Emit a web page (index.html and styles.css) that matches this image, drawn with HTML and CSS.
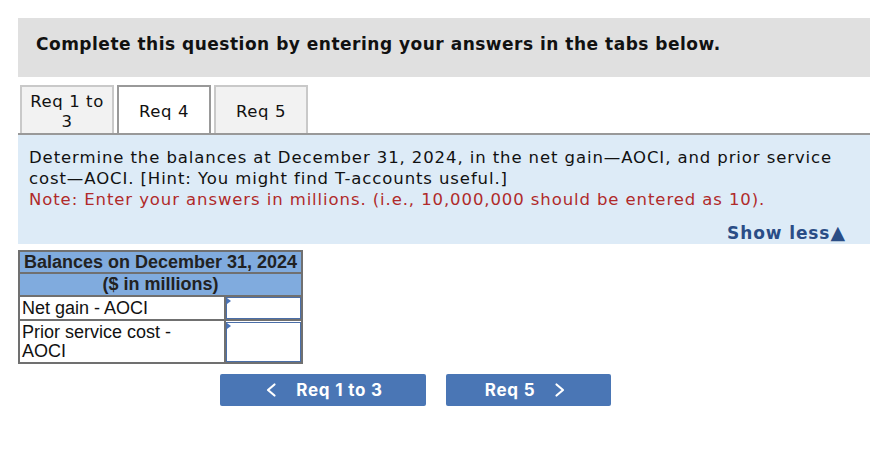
FILE: index.html
```html
<!DOCTYPE html>
<html lang="en">
<head>
  <meta charset="UTF-8" />
  <title>Req 4</title>
  <link rel="stylesheet" href="styles.css">
</head>
<body>

<div class="page">
  <div class="instructions">Complete this question by entering your answers in the tabs below.</div>

  <div class="tabs">
    <div class="tab">Req 1 to 3</div>
    <div class="tab active">Req 4</div>
    <div class="tab">Req 5</div>
  </div>

  <div class="question">
    <p>Determine the balances at December 31, 2024, in the net gain&mdash;AOCI, and prior service cost&mdash;AOCI. [Hint: You might find T-accounts useful.]</p>
    <p class="note">Note: Enter your answers in millions. (i.e., 10,000,000 should be entered as 10).</p>
    <div class="show-less">Show less<span class="tri">&#9650;</span></div>
  </div>

  <table class="balances">
    <tr class="head1"><th colspan="2">Balances on December 31, 2024</th></tr>
    <tr class="head2"><th colspan="2">($ in millions)</th></tr>
    <tr class="row1">
      <td class="label">Net gain - AOCI</td>
      <td class="entry"><div class="box"></div></td>
    </tr>
    <tr class="row2">
      <td class="label">Prior service cost -<br>AOCI</td>
      <td class="entry"><div class="box"></div></td>
    </tr>
  </table>

  <div class="nav">
    <button class="nav-btn prev">
      <svg class="chev" width="12" height="16" viewBox="0 0 12 16"><polyline points="9.5,2.5 3,8 9.5,13.5" fill="none" stroke="#fff" stroke-width="2.2" stroke-linecap="round" stroke-linejoin="round"/></svg>
      Req 1 to 3
    </button>
    <button class="nav-btn next">
      Req 5
      <svg class="chev" width="12" height="16" viewBox="0 0 12 16"><polyline points="2.5,2.5 9,8 2.5,13.5" fill="none" stroke="#fff" stroke-width="2.2" stroke-linecap="round" stroke-linejoin="round"/></svg>
    </button>
  </div>
</div>

</body>
</html>
```

FILE: styles.css
```css
body {
  margin: 0;
  font-family: "DejaVu Sans", Verdana, sans-serif;
  color: #111;
}
.page {
  padding: 18px 0 0 18px;
  width: 852px;
}
.instructions {
  background: #e0e0e0;
  height: 59px;
  box-sizing: border-box;
  padding: 16px 0 0 18px;
  font-weight: bold;
  font-size: 17px;
  letter-spacing: 0.5px;
}
.tabs {
  display: flex;
  gap: 3px;
  margin-top: 8px;
  padding-left: 2px;
  border-bottom: 2px solid #999;
}
.tab {
  width: 94px;
  height: 48px;
  box-sizing: border-box;
  border: 2px solid #c9c9c9;
  border-bottom: none;
  background: #f2f2f2;
  font-size: 16.5px;
  letter-spacing: 0.6px;
  line-height: 20px;
  text-align: center;
  display: flex;
  align-items: center;
  justify-content: center;
  padding: 4px 4px 0;
}
.tab.active {
  background: #fff;
  border-color: #999;
}
.question {
  background: #ddebf7;
  height: 109px;
  box-sizing: border-box;
  padding: 12px 20px 0 11px;
  font-size: 16.5px;
  letter-spacing: 0.9px;
  line-height: 21px;
}
.question p {
  margin: 0;
}
.note {
  color: #b02a2a;
}
.show-less {
  text-align: right;
  font-weight: bold;
  font-size: 17px;
  letter-spacing: 0.9px;
  color: #2a4d86;
  margin: 13px 5px 0 0;
}
.tri {
  font-size: 19px;
  line-height: 17px;
  letter-spacing: 0;
}
.balances {
  margin-top: 6px;
  border-collapse: collapse;
  border: 2px solid #707070;
  width: 285px;
  font-family: "Liberation Sans", Arial, sans-serif;
  font-size: 18px;
}
.balances th {
  background: #80abde;
  color: #222;
  border: 2px solid #707070;
  padding: 0;
  line-height: 19px;
}
.balances td {
  border: 2px solid #707070;
  padding: 0;
  line-height: 19px;
}
.head1 th {
  height: 20px;
}
.head2 th {
  height: 21px;
}
.row1 td {
  height: 22px;
}
.row2 td {
  height: 41px;
}
.balances .label {
  padding-left: 2px;
  width: 202px;
}
.box {
  border: 1px solid #4a6ea8;
  height: 20px;
  position: relative;
}
.row2 .box {
  height: 38px;
}
.box::before {
  content: "";
  position: absolute;
  left: 0;
  top: 0;
  border-left: 4px solid #4a74b8;
  border-top: 3px solid transparent;
  border-bottom: 3px solid transparent;
}
.nav {
  display: flex;
  gap: 20px;
  margin: 10px 0 0 202px;
}
.nav-btn {
  background: #4a76b5;
  color: #fff;
  border: none;
  border-radius: 2px;
  height: 32px;
  font-family: Inter, "Noto Sans", sans-serif;
  font-weight: 700;
  font-size: 17px;
  letter-spacing: 0.8px;
  padding: 0;
  display: flex;
  align-items: center;
  justify-content: center;
  gap: 19px;
}
.prev {
  width: 206px;
  padding-left: 2px;
}
.next {
  width: 165px;
  padding-right: 6px;
}
```
